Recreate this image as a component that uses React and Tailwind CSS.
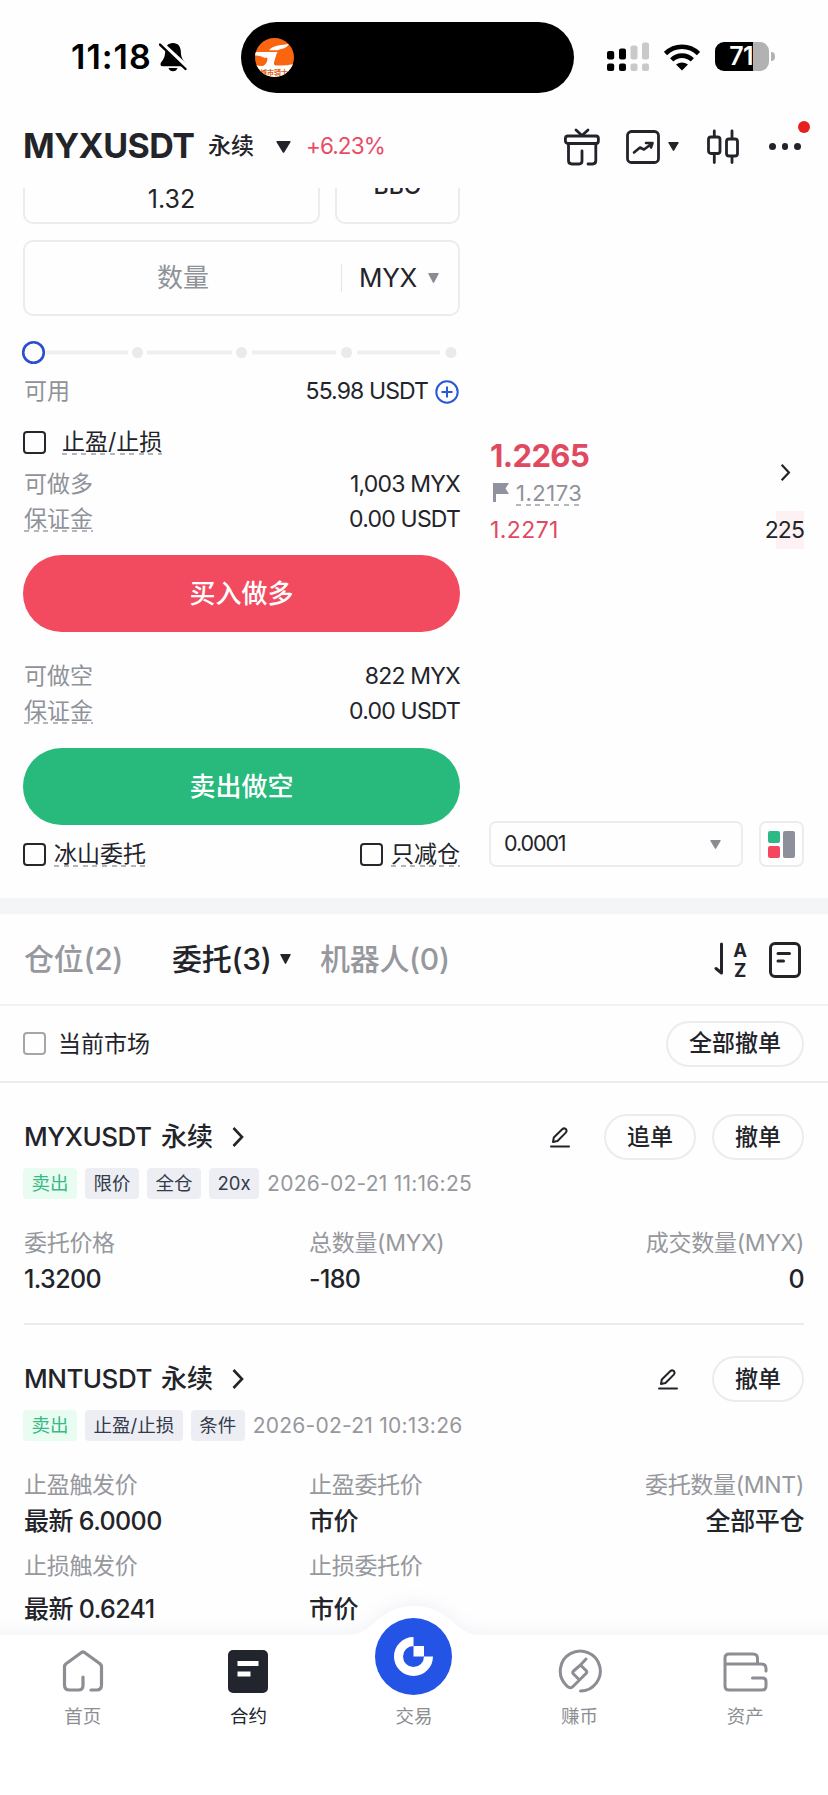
import React from 'react'

const orders = [
	{
		symbol: 'MYXUSDT',
		chase: true,
		tags: ['限价', '全仓', '20x'],
		time: '2026-02-21 11:16:25',
		rows: [
			[['委托价格', '1.3200'], ['总数量(MYX)', '-180'], ['成交数量(MYX)', '0']],
		],
	},
	{
		symbol: 'MNTUSDT',
		chase: false,
		tags: ['止盈/止损', '条件'],
		time: '2026-02-21 10:13:26',
		rows: [
			[['止盈触发价', '最新 6.0000'], ['止盈委托价', '市价'], ['委托数量(MNT)', '全部平仓']],
			[['止损触发价', '最新 0.6241'], ['止损委托价', '市价']],
		],
	},
]

function Caret({ className })
{
	return (
		<svg viewBox="0 0 16 13" preserveAspectRatio="none" className={className} fill="currentColor">
			<path d="M1.2 0H14.8Q16 .2 15.4 1.4L8.9 12.3Q8 13.4 7.1 12.3L.6 1.4Q0 .2 1.2 0Z" />
		</svg>
	)
}

function Chevron({ className })
{
	return (
		<svg viewBox="0 0 12 20" className={className} fill="none" stroke="currentColor" strokeWidth="2.6">
			<path d="M1.5 1L10 10L1.5 19" />
		</svg>
	)
}

function Dashed({ children, className = '' })
{
	return (
		<span className={`inline-block h-[26px] leading-[26px] bg-[image:repeating-linear-gradient(90deg,#b4b6bb_0_5px,transparent_5px_9.6px)] bg-[length:100%_2px] bg-bottom bg-no-repeat ${className}`}>
			{children}
		</span>
	)
}

function Checkbox({ className = 'border-[#25272c]' })
{
	return <span className={`block size-[23px] shrink-0 rounded-[4px] border-2 ${className}`} />
}

function InfoRow({ label, value, className, dashed })
{
	return (
		<div className={`flex items-center justify-between pl-px ${className}`}>
			{dashed ? <Dashed className="text-[#8f9299]">{label}</Dashed> : <span className="text-[#8f9299]">{label}</span>}
			<span className="tracking-[-0.8px]">{value}</span>
		</div>
	)
}

function StatusBar()
{
	return (
		<div className="flex h-[114px] items-center text-black">
			<span className="ml-[71px] w-[88px] text-[34px] font-semibold tracking-[1px]">11:18</span>
			<svg viewBox="0 0 28 30" className="h-[30px] w-[28px] shrink-0">
				<path d="M14 1C9 1 6.4 4.6 6.2 9C6 14.5 5 17 2 20.5C1 22 1.4 24.3 3.5 24.3H24.5C26.6 24.3 27 22 26 20.5C23 17 22 14.5 21.8 9C21.6 4.6 19 1 14 1Z" />
				<path d="M9.5 26H18.5C18 28 16.2 29.3 14 29.3S10 28 9.5 26Z" />
				<path d="M.5 0L28 25.5" stroke="#fff" strokeWidth="5" />
				<path d="M1 2.6L26.5 27" stroke="#000" strokeWidth="2.4" strokeLinecap="round" />
			</svg>
			<div className="ml-[54px] flex h-[71px] w-[333px] shrink-0 items-center rounded-full bg-black pl-[14px]">
				<div className="relative size-[39px] overflow-hidden rounded-full bg-[#f9660f]">
					<svg viewBox="0 0 39 39" className="absolute inset-0 size-full" fill="#fff">
						<path d="M14 12.200Q17 8.500 23 7.500L34 6Q31 10.500 26 11L22.500 12.200Z" />
						<path d="M0 14H22.500Q21 17 20.300 20L19 24.500Q18.500 27 21 27.500Q30 28 39 26V39H0V26.500Q4 28.500 8 28Q12 26 12.500 21Q12.500 18.500 10 20Q5 17 0 17.500Z" />
					</svg>
					<span className="absolute bottom-0 left-[5px] text-[7px] font-bold leading-[8px] whitespace-nowrap text-[#e0600f]">城市骑士</span>
				</div>
			</div>
			<svg viewBox="0 0 43 30" className="ml-[33px] h-[30px] w-[43px] shrink-0">
				<g fill="#000">
					<rect x="0" y="9" width="7.200" height="8.500" rx="2" />
					<rect x="12" y="6.500" width="7" height="11" rx="2" />
					<rect x="0" y="21.500" width="7.200" height="7.500" rx="2" />
					<rect x="12" y="21.500" width="7" height="7.500" rx="2" />
				</g>
				<g fill="#c9c9c9">
					<rect x="23.500" y="3.500" width="7" height="14" rx="2" />
					<rect x="35" y="0.500" width="7" height="17" rx="2" />
					<rect x="23.500" y="21.500" width="7" height="7.500" rx="2" />
					<rect x="35" y="21.500" width="7" height="7.500" rx="2" />
				</g>
			</svg>
			<svg viewBox="0 0 36 27" className="ml-[14px] h-[27px] w-[36px] shrink-0" fill="none" stroke="#000" strokeWidth="4.600">
				<path d="M1.500 9.500A23.500 23.500 0 0 1 34.500 9.500" />
				<path d="M7.700 15.800A14.700 14.700 0 0 1 28.300 15.800" />
				<path d="M18 26.500L12 20.500Q18 16.500 24 20.500Z" fill="#000" stroke="none" />
			</svg>
			<div className="mb-[2px] ml-[15px] flex h-[29px] w-[54px] shrink-0 items-center justify-center rounded-[9px] bg-linear-to-r from-black from-71% to-[#b2b2b2] to-71% pr-[2px] text-[25px] font-semibold tracking-[-0.7px] text-white">71</div>
			<span className="mb-[2px] ml-[2px] h-[9px] w-[4px] rounded-r-full bg-[#b2b2b2]" />
		</div>
	)
}

function Header()
{
	return (
		<div className="flex h-[74px] items-center pb-[9px]">
			<h1 className="mb-[2px] ml-[23px] w-[185px] text-[34px] font-bold tracking-[-0.5px]">MYXUSDT</h1>
			<span className="w-[68px] font-medium">永续</span>
			<Caret className="h-[12px] w-[15px]" />
			<span className="ml-[15px] w-[257px] text-[22.500px] tracking-[-0.9px] text-[#ea4c66]">+6.23%</span>
			<svg viewBox="0 0 38 38" className="h-[38px] w-[38px] shrink-0" fill="none" stroke="currentColor" strokeWidth="2.800" strokeLinecap="round" strokeLinejoin="round">
				<path d="M13 2L19 7.500L25 2" />
				<rect x="2.400" y="8" width="33" height="7.500" rx="2.500" />
				<path d="M5.500 15.500V32.500Q5.500 36 9 36H16Q19 36 19 33V23" />
				<path d="M32.800 15.500V32.500Q32.800 36 29.500 36H25" />
			</svg>
			<svg viewBox="0 0 34 34" className="ml-[25px] h-[34px] w-[34px] shrink-0" fill="none" stroke="currentColor" strokeWidth="2.800" strokeLinecap="round" strokeLinejoin="round">
				<rect x="1.500" y="1.500" width="31" height="31" rx="4" />
				<path d="M8 22.500L14 17.500L18 19.500L26 13.500M20 13H26.500L25 17.500" strokeWidth="2.600" />
			</svg>
			<Caret className="ml-[8px] h-[9px] w-[11px]" />
			<svg viewBox="0 0 32 36" className="ml-[28px] h-[36px] w-[32px] shrink-0" fill="none" stroke="currentColor" strokeWidth="2.800" strokeLinecap="round">
				<rect x="1.500" y="8" width="11.500" height="16.500" rx="2.500" />
				<rect x="19.500" y="10" width="11" height="17" rx="2.500" />
				<path d="M7.300 2V7.500M7.300 25V33.500M25 2V9.500M25 27.500V33.500" />
			</svg>
			<div className="relative ml-[30px] flex items-center gap-[6px]">
				<span className="size-[6.500px] rounded-full bg-[#22242a]" />
				<span className="size-[6.500px] rounded-full bg-[#22242a]" />
				<span className="size-[6.500px] rounded-full bg-[#22242a]" />
				<span className="absolute -top-[22px] left-[29px] size-[12px] rounded-full bg-[#e8201f]" />
			</div>
		</div>
	)
}

function OrderForm()
{
	return (
		<div className="ml-[23px] w-[437px]">
			<div className="flex h-[36px] items-end gap-[15px] overflow-hidden text-[25px]">
				<div className="flex h-[76px] w-[297px] items-center justify-center rounded-[10px] border-2 border-[#ececee] pt-[26px]">1.32</div>
				<div className="flex h-[76px] w-[125px] items-center justify-center rounded-[10px] border-2 border-[#ececee] text-[23px] font-medium">BBO</div>
			</div>
			<div className="mt-[16px] flex h-[76px] items-center rounded-[10px] border-2 border-[#ececee] text-[26px]">
				<span className="w-[316px] text-center text-[#8f9299]">数量</span>
				<span className="h-[28px] w-px bg-[#e4e5e8]" />
				<span className="ml-[17px] w-[69px] tracking-[-0.3px]">MYX</span>
				<Caret className="h-[10px] w-[11px] text-[#8a8c91]" />
			</div>
			<svg viewBox="-1 0 437 25" className="mt-[24px] h-[25px] w-[437px] overflow-visible">
				<path d="M22 12.500H104M123 12.500H208M228 12.500H312M333 12.500H416" stroke="#efeff2" strokeWidth="4" />
				<g fill="#e9eaed">
					<circle cx="113.500" cy="12.500" r="5.500" />
					<circle cx="217.500" cy="12.500" r="5.500" />
					<circle cx="322.500" cy="12.500" r="5.500" />
					<circle cx="427" cy="12.500" r="5.500" />
				</g>
				<circle cx="9.500" cy="12.500" r="10.300" fill="#fff" stroke="#2b4fcf" strokeWidth="2.600" />
			</svg>
			<div className="flex h-[53px] items-center pl-px">
				<span className="text-[#8f9299]">可用</span>
				<span className="ml-auto tracking-[-0.9px]">55.98 USDT</span>
				<svg viewBox="0 0 24 24" className="ml-[7px] mr-px size-[24px]" fill="none" stroke="#2b57d8" strokeWidth="2">
					<circle cx="12" cy="12" r="10.700" />
					<path d="M12 6.500V17.500M6.500 12H17.500" />
				</svg>
			</div>
			<div className="flex h-[48px] items-center">
				<Checkbox />
				<Dashed className="ml-[16px]">止盈/止损</Dashed>
			</div>
			<InfoRow label="可做多" value="1,003 MYX" className="h-[36px]" />
			<InfoRow label="保证金" value="0.00 USDT" className="h-[34px]" dashed />
			<button className="mt-[19px] block h-[77px] w-full rounded-full bg-[#f24a5e] text-[26px] font-medium text-white">买入做多</button>
			<InfoRow label="可做空" value="822 MYX" className="mt-[26px] h-[36px]" />
			<InfoRow label="保证金" value="0.00 USDT" className="h-[34px]" dashed />
			<button className="mt-[20px] block h-[77px] w-full rounded-full bg-[#27ba7c] text-[26px] font-medium text-white">卖出做空</button>
			<div className="flex h-[58px] items-center">
				<Checkbox />
				<Dashed className="ml-[8px]">冰山委托</Dashed>
				<Checkbox className="ml-auto border-[#25272c]" />
				<Dashed className="ml-[8px]">只减仓</Dashed>
			</div>
		</div>
	)
}

function OrderBook()
{
	return (
		<div className="ml-[29px] flex w-[315px] flex-col pt-[250px]">
			<div className="ml-px flex h-[73px] items-center justify-between">
				<div>
					<div className="h-[36px] text-[31px] font-bold leading-[36px] tracking-[-0.6px] text-[#e04a60]">1.2265</div>
					<div className="flex h-[37px] items-center text-[#8f9299]">
						<svg viewBox="0 0 16 19" className="ml-[3px] h-[19px] w-[16px]" fill="#9092a0">
							<path d="M0 0H16L12.500 5.500L16 11H3V19H0Z" />
						</svg>
						<Dashed className="ml-[7px] text-[22px] leading-[24px] tracking-[0.5px]">1.2173</Dashed>
					</div>
				</div>
				<Chevron className="mb-[4px] mr-[13px] h-[17px] w-[11px]" />
			</div>
			<div className="ml-px flex h-[38px] items-center justify-between">
				<span className="tracking-[0.4px] text-[#e04a60]">1.2271</span>
				<span className="flex h-full items-center bg-linear-to-r from-transparent from-28% to-[#fdf1f3] to-28% tracking-[-0.9px]">225</span>
			</div>
			<div className="mt-[272px] flex justify-between">
				<div className="flex h-[46px] w-[254px] items-center justify-between rounded-[7px] border-2 border-[#ececee] pl-[13px] pr-[20px] text-[21.500px] tracking-[-1.1px]">
					0.0001
					<Caret className="h-[9px] w-[11px] text-[#8a8c91]" />
				</div>
				<div className="flex h-[46px] w-[45px] items-center justify-center gap-[3px] rounded-[7px] border-2 border-[#ececee]">
					<div className="flex flex-col gap-[3px]">
						<span className="size-[12px] rounded-[2px] bg-[#2db985]" />
						<span className="size-[12px] rounded-[2px] bg-[#f3475f]" />
					</div>
					<span className="h-[27px] w-[12px] rounded-[2px] bg-[#8d909b]" />
				</div>
			</div>
		</div>
	)
}

function Tabs()
{
	return (
		<div className="flex h-[92px] items-center border-b-2 border-[#f2f2f4] text-[30px] font-medium tracking-[-0.3px] text-[#96989d]">
			<span className="ml-[24px] w-[148px]">仓位(2)</span>
			<span className="w-[108px] text-[#22242a]">委托(3)</span>
			<Caret className="h-[10px] w-[11px] text-[#22242a]" />
			<span className="ml-[29px]">机器人(0)</span>
			<svg viewBox="0 0 10 34" className="ml-auto h-[34px] w-[10px] text-[#22242a]" fill="none" stroke="currentColor" strokeWidth="3" strokeLinecap="round" strokeLinejoin="round">
				<path d="M7.500 2V31L2 26.500" />
			</svg>
			<div className="ml-[9px] flex w-[14px] flex-col items-center pt-px text-[18.500px] font-bold leading-[20px] text-[#22242a]">
				<span>A</span>
				<span>Z</span>
			</div>
			<svg viewBox="0 0 32 36" className="ml-[22px] mr-[27px] mt-px h-[36px] w-[32px] text-[#22242a]" fill="none" stroke="currentColor" strokeWidth="3" strokeLinecap="round">
				<rect x="1.500" y="1.500" width="29" height="33" rx="4.500" />
				<path d="M9 11.500H20.500M9 19H14.500" />
			</svg>
		</div>
	)
}

function PillButton({ children, className = 'w-[92px]' })
{
	return (
		<button className={`h-[46px] shrink-0 rounded-full border-2 border-[#ececee] font-medium ${className}`}>{children}</button>
	)
}

function OrderItem({ order })
{
	return (
		<div className="mx-[24px] mt-[31px]">
			<div className="flex h-[46px] items-center text-[26px] font-medium">
				<span className="w-[137px] tracking-[-0.5px]">{order.symbol}</span>
				<span>永续</span>
				<Chevron className="ml-[19px] h-[20px] w-[12px]" />
				<svg viewBox="0 0 20 21" className="ml-auto h-[21px] w-[20px]" fill="none" stroke="currentColor" strokeWidth="2" strokeLinejoin="round">
					<path d="M3 15L3.800 10.500L12.200 2.200Q14 .600 15.800 2Q17.300 3.800 15.800 5.600L7.500 14Z" />
					<path d="M1 19.500H19" strokeLinecap="round" />
				</svg>
				<div className="ml-[34px] flex gap-[16px] text-[23px]">
					{order.chase && <PillButton>追单</PillButton>}
					<PillButton>撤单</PillButton>
				</div>
			</div>
			<div className="-ml-px mt-[8px] flex h-[31px] items-center gap-[8px] text-[18.500px] text-[#343a49]">
				<span className="flex h-full items-center rounded-[4px] bg-[#e9fcf2] px-[8.500px] text-[#35ba84]">卖出</span>
				{order.tags.map(tag => (
					<span key={tag} className="flex h-full items-center rounded-[4px] bg-[#eceef4] px-[8.500px]">{tag}</span>
				))}
				<span className="text-[21px] tracking-[0.250px] text-[#96989d]">{order.time}</span>
			</div>
			<div className="mt-[26px] flex flex-col gap-[9px]">
				{order.rows.map((row, i) => (
					<div key={i} className="grid grid-cols-[285px_285px_1fr]">
						{row.map(([label, value], j) => (
							<div key={j} className={j === 2 ? 'text-right' : ''}>
								<div className="h-[36px] leading-[36px] tracking-[-0.3px] text-[#96989d]">{label}</div>
								<div className={`h-[36px] text-[25px] font-medium leading-[36px] ${/\d/.test(value) ? 'tracking-[-0.6px]' : 'tracking-[-0.4px]'} ${i ? 'mt-[7px]' : ''}`}>{value}</div>
							</div>
						))}
					</div>
				))}
			</div>
		</div>
	)
}

function NavItem({ label, children, active })
{
	return (
		<div className={`relative flex flex-1 flex-col items-center ${active ? 'text-[#22242a]' : 'text-[#8c8e93]'}`}>
			<div className="flex h-[70px] items-center justify-center">{children}</div>
			<span className="text-[18.500px] leading-[22px]">{label}</span>
		</div>
	)
}

function BottomNav()
{
	return (
		<nav className="relative mt-[8px] flex h-[160px] shrink-0">
			<svg viewBox="0 0 828 200" className="absolute -top-[40px] left-0 h-[200px] w-[828px] overflow-visible drop-shadow-[0_-5px_7px_rgba(60,80,150,0.06)]">
				<path d="M-20 40H345Q362 40 372 30Q390 11 414 11T456 30Q466 40 483 40H848V220H-20Z" fill="#fff" />
			</svg>
			<NavItem label="首页">
				<svg viewBox="0 0 42 42" className="mt-px size-[42px]" fill="none" stroke="currentColor" strokeWidth="3.200" strokeLinecap="round" strokeLinejoin="round">
					<path d="M29 40H34.500Q39.500 40 39.500 35V17Q39.500 15 38 13.700L22.500 2.500Q21 1.500 19.500 2.500L4 13.700Q2.500 15 2.500 17V35Q2.500 40 7.500 40H16.500Q21 40 21 35.500V27" />
				</svg>
			</NavItem>
			<NavItem label="合约" active>
				<svg viewBox="0 0 40 43" className="mt-[3px] h-[43px] w-[40px]">
					<rect width="40" height="43" rx="5" fill="#22242e" />
					<path d="M9.500 11H30.500V16H9.500ZM9.500 21.500H22.500V26.500H9.500Z" fill="#fff" />
				</svg>
			</NavItem>
			<NavItem label="交易">
				<div className="-mt-[27px] flex size-[77px] items-center justify-center rounded-full bg-[#2354e6]">
					<svg viewBox="0 0 39 39" className="size-[39px]">
						<path d="M19.500 4.500A15 15 0 1 0 34.500 19.500" fill="none" stroke="#fff" strokeWidth="9" />
						<rect x="19.500" y="9" width="10.500" height="10.500" fill="#fff" />
					</svg>
				</div>
			</NavItem>
			<NavItem label="赚币">
				<svg viewBox="0 0 44 44" className="mt-px size-[44px]" fill="none" stroke="currentColor" strokeWidth="3" strokeLinecap="round" strokeLinejoin="round">
					<path d="M22.500 42A20 20 0 1 0 8 36Q12 41 15.500 37L28 24.500Q29.500 23 28 21.500L22.500 16L15.500 22Q14 23.500 15.500 25L20.500 30M22.500 16L28 10" />
				</svg>
			</NavItem>
			<NavItem label="资产">
				<svg viewBox="0 0 45 40" className="mt-[3px] h-[40px] w-[45px]" fill="none" stroke="currentColor" strokeWidth="3" strokeLinecap="round" strokeLinejoin="round">
					<path d="M2 12V6Q2 2 6 2H30Q34.500 2 34.500 6.500V12M2 12H38Q43 12 43 17V19M2 12V34Q2 38 6 38H39Q43 38 43 34V29.500Q43 26 39.500 26H29.500" />
				</svg>
			</NavItem>
		</nav>
	)
}

export default function App()
{
	return (
		<div className="flex h-[1795px] w-[828px] flex-col overflow-hidden bg-[#fefefe] font-['Inter','Noto_Sans_CJK_SC',sans-serif] text-[23px] leading-none text-[#22242a]">
			<StatusBar />
			<Header />
			<div className="flex h-[710px] shrink-0 overflow-hidden">
				<OrderForm />
				<OrderBook />
			</div>
			<div className="h-[16px] shrink-0 bg-[#f4f5f7]" />
			<Tabs />
			<div className="flex h-[77px] shrink-0 items-center border-b-2 border-[#ececee] pl-[23px] pr-[24px]">
				<Checkbox className="border-[#a5a6aa]" />
				<span className="ml-[12px] pt-[2px]">当前市场</span>
				<PillButton className="ml-auto w-[138px]">全部撤单</PillButton>
			</div>
			<OrderItem order={orders[0]} />
			<div className="mx-[24px] mt-[26px] h-[2px] shrink-0 bg-[#ececee]" />
			<OrderItem order={orders[1]} />
			<BottomNav />
		</div>
	)
}
